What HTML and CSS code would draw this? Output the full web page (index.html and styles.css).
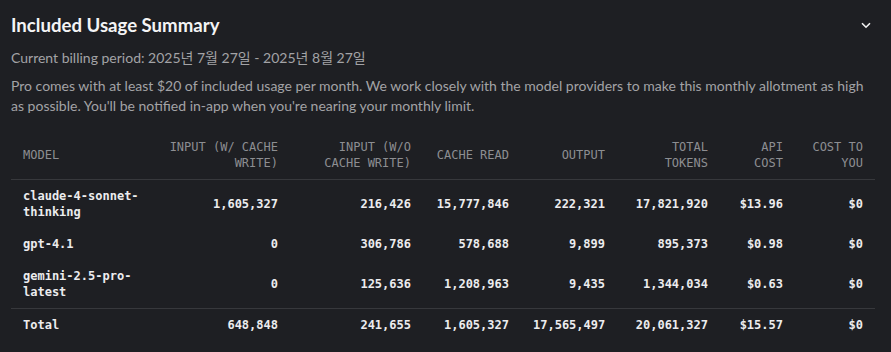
FILE: index.html
```html
<!DOCTYPE html>
<html lang="en">
<head>
<meta charset="utf-8">
<title>Included Usage Summary</title>
<link rel="stylesheet" href="styles.css">
</head>
<body>
<section class="panel">
  <header class="panel-head">
    <h2 class="title">Included Usage Summary</h2>
    <svg class="chevron" width="10" height="7" viewBox="0 0 10 7" aria-hidden="true"><path d="M1 1.2 L5 5.2 L9 1.2" fill="none" stroke="#f2f2f2" stroke-width="1.6"/></svg>
  </header>
  <p class="period">Current billing period: 2025년 7월 27일 - 2025년 8월 27일</p>
  <p class="desc">Pro comes with at least $20 of included usage per month. We work closely with the model providers to make this monthly allotment as high as possible. You'll be notified in-app when you're nearing your monthly limit.</p>
  <table class="usage">
    <colgroup>
      <col class="c1"><col class="c2"><col class="c3"><col class="c4"><col class="c5"><col class="c6"><col class="c7"><col class="c8">
    </colgroup>
    <thead>
      <tr>
        <th class="left">MODEL</th>
        <th>INPUT (W/ CACHE WRITE)</th>
        <th>INPUT (W/O CACHE WRITE)</th>
        <th>CACHE READ</th>
        <th>OUTPUT</th>
        <th>TOTAL TOKENS</th>
        <th>API COST</th>
        <th>COST TO YOU</th>
      </tr>
    </thead>
    <tbody>
      <tr>
        <td class="left">claude-4-sonnet-thinking</td>
        <td>1,605,327</td><td>216,426</td><td>15,777,846</td><td>222,321</td><td>17,821,920</td><td>$13.96</td><td>$0</td>
      </tr>
      <tr>
        <td class="left">gpt-4.1</td>
        <td>0</td><td>306,786</td><td>578,688</td><td>9,899</td><td>895,373</td><td>$0.98</td><td>$0</td>
      </tr>
      <tr>
        <td class="left">gemini-2.5-pro-latest</td>
        <td>0</td><td>125,636</td><td>1,208,963</td><td>9,435</td><td>1,344,034</td><td>$0.63</td><td>$0</td>
      </tr>
      <tr class="total">
        <td class="left">Total</td>
        <td>648,848</td><td>241,655</td><td>1,605,327</td><td>17,565,497</td><td>20,061,327</td><td>$15.57</td><td>$0</td>
      </tr>
    </tbody>
  </table>
</section>
</body>
</html>
```
FILE: styles.css
```css
html, body {
  margin: 0;
  padding: 0;
  background: #1e1f23;
}
body {
  font-family: "Lato", "Noto Sans CJK KR", sans-serif;
  color: #f2f2f2;
}
.panel {
  padding: 12px 16px 0 11px;
}
.panel-head {
  display: flex;
  align-items: center;
  justify-content: space-between;
  height: 26px;
}
.title {
  margin: 0;
  font-size: 18.6px;
  font-weight: 700;
  color: #f4f4f5;
}
.chevron {
  margin-right: 4px;
}
.period {
  margin: 10px 0 0;
  font-size: 14px;
  line-height: 20px;
  color: #a3a3a6;
}
.desc {
  margin: 8px 0 0;
  font-size: 14px;
  line-height: 20px;
  color: #a3a3a6;
}
.usage {
  margin-top: 15px;
  width: 864px;
  table-layout: fixed;
  border-collapse: collapse;
  font-family: "DejaVu Sans Mono", "Liberation Mono", monospace;
  font-size: 12px;
  line-height: 16px;
}
.c1 { width: 144px; }
.c2 { width: 135px; }
.c3 { width: 133px; }
.c4 { width: 98px; }
.c5 { width: 96px; }
.c6 { width: 103px; }
.c7 { width: 75px; }
.c8 { width: 80px; }
.usage th, .usage td {
  padding: 8px 12px;
  text-align: right;
  vertical-align: middle;
}
.usage th {
  font-weight: 400;
  color: #8d8e92;
  border-bottom: 1px solid #37383c;
}
.usage td {
  font-weight: 700;
  color: #ececee;
}
.usage .left {
  text-align: left;
}
.usage .total td {
  border-top: 1px solid #37383c;
}
```
